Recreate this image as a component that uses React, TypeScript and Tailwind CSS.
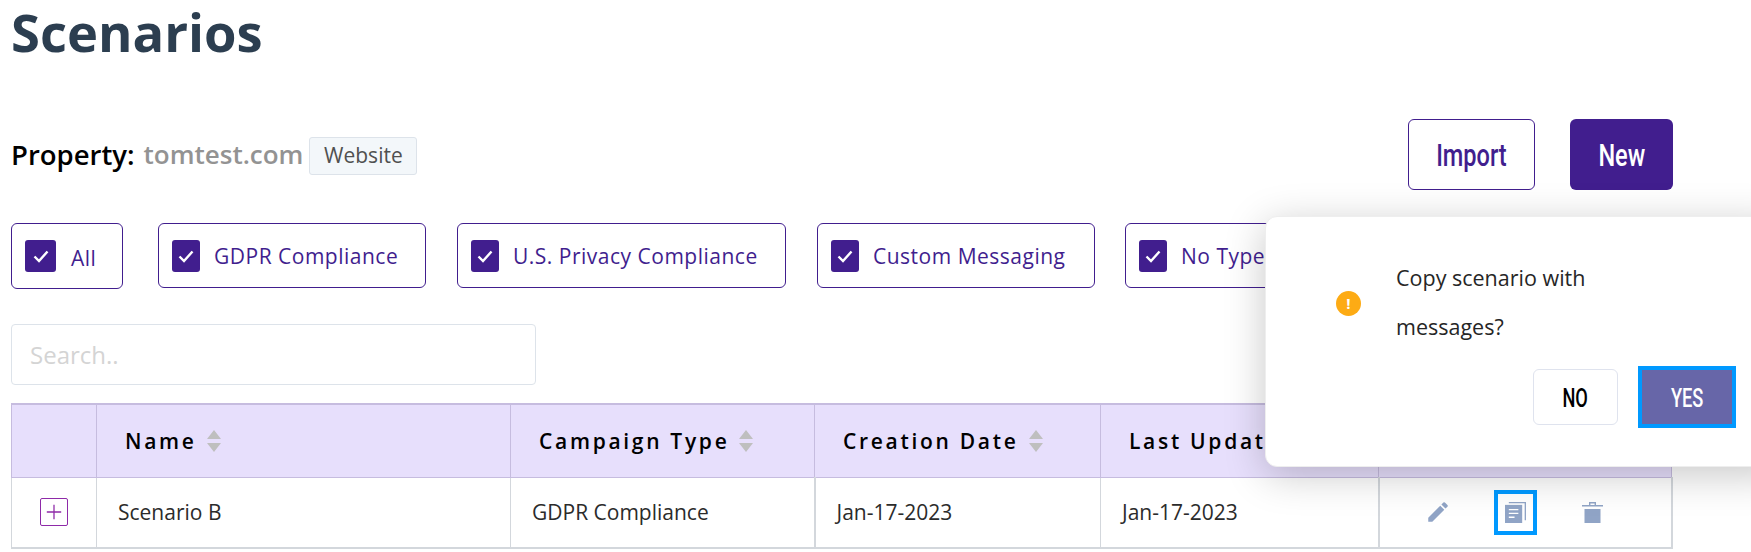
import { MdEdit } from 'react-icons/md';

const OPEN = "font-['Open_Sans',sans-serif]";
const CONDENSED = "font-['Roboto',sans-serif] font-medium";

function FilterBox({ label, className, labelClass = 'ml-[14px] mt-[3px]', boxClass = 'w-[28px]' }: { label: string; className: string; labelClass?: string; boxClass?: string }) {
  return (
    <div className={`flex shrink-0 items-center rounded-[6px] border border-[#411e8e] pl-[13px] ${className}`}>
      <span className={`flex h-[32px] items-center justify-center rounded-[3px] bg-[#411e8e] ${boxClass}`}>
        <svg viewBox="0 0 20 20" className="h-[20px] w-[20px]" fill="none" stroke="white" strokeWidth="2.4">
          <path d="M3.5 10.5 L8 15 L16.5 5.5" />
        </svg>
      </span>
      <span className={`whitespace-nowrap text-[21px] tracking-[0.5px] text-[#411e8e] ${labelClass}`}>{label}</span>
    </div>
  );
}

function HeaderCell({ label, className, sort = true }: { label: string; className: string; sort?: boolean }) {
  return (
    <th className={`border-r border-[#c6bcdf] pt-[1px] text-left align-middle text-[21px] font-semibold tracking-[2.7px] text-black ${className}`}>
      <span className="inline-flex items-center gap-[10px] whitespace-nowrap">
        {label}
        {sort && (
          <svg viewBox="0 0 14 24" className="h-[24px] w-[14px]" fill="#bfbfbf">
            <path d="M7 1 L14 10 H0 Z M0 14 H14 L7 23 Z" />
          </svg>
        )}
      </span>
    </th>
  );
}

export default function App() {
  return (
    <div className={`relative h-[552px] w-[1751px] overflow-hidden bg-white ${OPEN}`}>
      <div className="pl-[11px]">
        <h1 className="text-[52.5px] font-bold leading-[64px] text-[#2c3e50]">Scenarios</h1>

        {/* property row + actions */}
        <div className="mt-[55px] flex h-[71px] items-center justify-between pr-[78px]">
          <div className="flex items-center">
            <span className="text-[27.5px] font-semibold text-black">Property:</span>
            <span className="ml-[9px] text-[26px] font-semibold text-[#939393]">tomtest.com</span>
            <span className="ml-[6px] mt-[3px] flex h-[38px] w-[108px] items-center justify-center rounded-[3px] border border-[#dde3ea] bg-[#f3f7fa] text-[21px] text-[#505050]">
              Website
            </span>
          </div>
          <div className={`flex gap-[35px] text-[31px] ${CONDENSED}`}>
            <button className="h-[71px] w-[127px] rounded-[6px] border border-[#411e8e] pt-[3px] text-[#411e8e]">
              <span className="inline-block scale-x-[0.76]">Import</span>
            </button>
            <button className="h-[71px] w-[103px] rounded-[6px] bg-[#411e8e] pt-[3px] text-white">
              <span className="inline-block scale-x-[0.76]">New</span>
            </button>
          </div>
        </div>

        {/* filters */}
        <div className="mt-[33px] flex h-[65px] items-start">
          <FilterBox label="All" boxClass="w-[31px]" labelClass="ml-[15px] mt-[6px]" className="h-[66px] w-[112px]" />
          <FilterBox label="GDPR Compliance" className="ml-[35px] h-[65px] w-[268px]" />
          <FilterBox label="U.S. Privacy Compliance" className="ml-[31px] h-[65px] w-[329px]" />
          <FilterBox label="Custom Messaging" className="ml-[31px] h-[65px] w-[278px]" />
          <FilterBox label="No Type" className="ml-[30px] h-[65px] w-[220px]" />
        </div>

        {/* search */}
        <div className="mt-[36px] flex h-[61px] w-[525px] items-center rounded-[4px] border border-[#dde3ea] pl-[18px] text-[24px] text-[#d4d4d4]">
          Search..
        </div>

        {/* table */}
        <table className="mt-[18px] table-fixed border-collapse" style={{ width: 1660 }}>
          <colgroup>
            <col className="w-[85px]" />
            <col className="w-[414px]" />
            <col className="w-[304px]" />
            <col className="w-[286px]" />
            <col className="w-[278px]" />
            <col className="w-[293px]" />
          </colgroup>
          <thead>
            <tr className="h-[73px] border-t-2 border-[#c6bcdf] bg-[#e7dffc]">
              <HeaderCell label="" sort={false} className="border-l" />
              <HeaderCell label="Name" className="pl-[28px]" />
              <HeaderCell label="Campaign Type" className="pl-[28px]" />
              <HeaderCell label="Creation Date" className="pl-[28px]" />
              <HeaderCell label="Last Updated" className="pl-[28px]" />
              <HeaderCell label="" sort={false} className="" />
            </tr>
          </thead>
          <tbody>
            <tr className="h-[71px] border-y border-b-2 border-[#c6bcdf] border-b-[#d3d7dc] text-[21px] text-[#2b2b2b]">
              <td className="border-x border-[#d3d7dc] text-center">
                <span className="mx-auto flex h-[28px] w-[28px] items-center justify-center rounded-[2px] border border-[#8e2aa8]">
                  <svg viewBox="0 0 20 20" className="h-[18px] w-[18px]" stroke="#8e2aa8" strokeWidth="1.4">
                    <path d="M10 2 V18 M2 10 H18" />
                  </svg>
                </span>
              </td>
              <td className="border-r border-[#d3d7dc] pl-[21px]">Scenario B</td>
              <td className="border-r-2 border-[#d3d7dc] pl-[21px]">GDPR Compliance</td>
              <td className="border-r border-[#d3d7dc] pl-[21px]">Jan-17-2023</td>
              <td className="border-r-2 border-[#d3d7dc] pl-[21px]">Jan-17-2023</td>
              <td className="border-r-2 border-[#d3d7dc]">
                <div className="flex items-center pl-[45px]">
                  <MdEdit className="h-[26px] w-[26px] text-[#90a4c6]" />
                  <span className="ml-[43px] flex h-[45px] w-[43px] items-center justify-center border-[4px] border-[#0099ff]">
                    <svg viewBox="0 0 22 22" className="h-[21px] w-[21px]">
                      <path d="M4 0 H22 V19 H20.6 V1.4 H4 Z" fill="#90a4c6" />
                      <rect x="0" y="3" width="18" height="19" fill="#90a4c6" />
                      <path d="M4 8 H14 M4 12 H14 M4 16 H10" stroke="white" strokeWidth="1.4" />
                    </svg>
                  </span>
                  <svg viewBox="0 0 21 21" className="ml-[45px] h-[21px] w-[21px]" fill="#90a4c6">
                    <path d="M0 3 H7 V0 H14 V3 H21 V4.4 H0 Z M8.4 3 H12.6 V1.4 H8.4 Z" fillRule="evenodd" />
                    <rect x="2.5" y="7" width="16" height="14" />
                  </svg>
                </div>
              </td>
            </tr>
          </tbody>
        </table>
      </div>

      {/* popconfirm */}
      <div className="absolute left-[1265px] top-[216px] h-[251px] w-[520px] rounded-[12px] border border-[#eeeeee] bg-white shadow-[0_8px_40px_rgba(0,0,0,0.22)]">
        <span className="absolute left-[70px] top-[74px] flex h-[25px] w-[25px] items-center justify-center rounded-full bg-[#fdab14] text-[15px] font-bold leading-none text-white">
          !
        </span>
        <p className="absolute left-[130px] top-[36px] w-[300px] text-[21.5px] leading-[49px] text-[#262626]">
          Copy scenario with messages?
        </p>
        <div className={`absolute left-[267px] top-[149px] flex items-center text-[26px] ${CONDENSED}`}>
          <button className="h-[56px] w-[85px] rounded-[6px] border border-[#dfe3ee] pt-[3px] text-black">
            <span className="inline-block scale-x-[0.7]">NO</span>
          </button>
          <button className="ml-[20px] h-[62px] w-[98px] border-[4px] border-[#0099ff] bg-[#6766a8] pt-[3px] text-white">
            <span className="inline-block scale-x-[0.7]">YES</span>
          </button>
        </div>
      </div>
    </div>
  );
}
